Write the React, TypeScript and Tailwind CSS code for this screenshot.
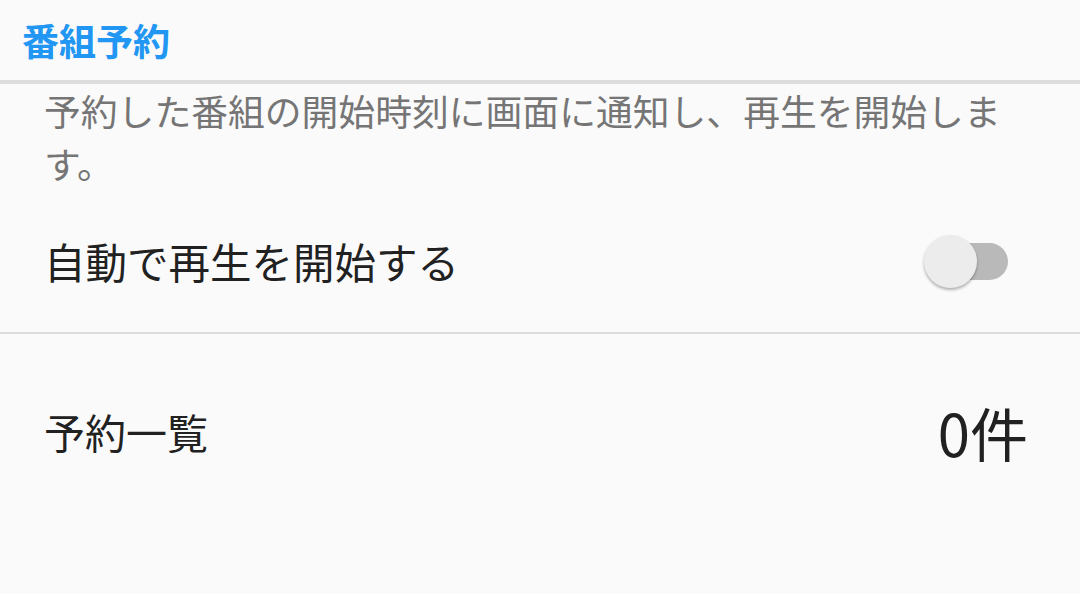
import { useState } from "react";

export default function App() {
    const [autoPlay, setAutoPlay] = useState(false);
    const reservations: string[] = [];

    return (
        <div
            className="w-[1080px] h-[594px] bg-[#fafafa] overflow-hidden"
            style={{ fontFamily: '"Noto Sans CJK JP", "Noto Sans", sans-serif' }}
        >
            {/* Header */}
            <div className="h-[84px] flex items-center px-[22px] border-b-4 border-[#dddddd]">
                <h1 className="text-[37px] font-bold text-[#2196f3] leading-none">番組予約</h1>
            </div>

            {/* Description + toggle */}
            <div className="px-[44px]">
                <p className="text-[36.8px] leading-[53px] text-[#757575]">
                    予約した番組の開始時刻に画面に通知し、再生を開始します。
                </p>
                <div className="h-[142px] flex items-center justify-between">
                    <span className="text-[41.5px] text-[#212121]">自動で再生を開始する</span>
                    <button
                        onClick={() => setAutoPlay(!autoPlay)}
                        className="relative w-[84px] h-[52px] mr-[28px] flex items-center"
                    >
                        <span className="absolute right-0 w-[68px] h-[37px] rounded-full bg-[#b9b9b9]"></span>
                        <span className="absolute left-0 w-[53px] h-[53px] rounded-full bg-[#ececec] shadow-[0_2px_3px_rgba(0,0,0,0.3)]"></span>
                    </button>
                </div>
            </div>

            <div className="h-[2px] bg-[#dddddd]"></div>

            {/* Reservation list */}
            <div className="h-[196px] pl-[44px] pr-[56px] flex items-center justify-between">
                <span className="text-[41px] text-[#212121]">予約一覧</span>
                <span className="text-[58px] text-[#212121] leading-none mr-[-4px]">{reservations.length}件</span>
            </div>
        </div>
    );
}
